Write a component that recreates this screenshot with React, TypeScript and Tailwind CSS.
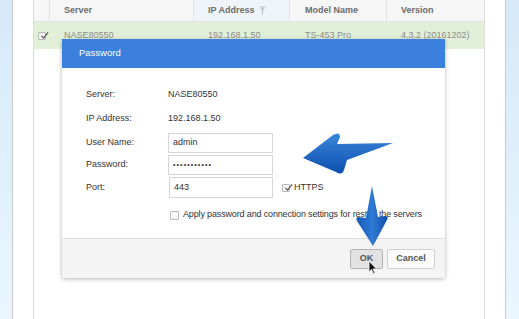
import React from "react";

const font = { fontFamily: '"Liberation Sans", Arial, sans-serif' };

function Check({ className }: { className?: string }) {
  return (
    <div className={"relative border border-[#b9b9b9] bg-[#f4f4f4] rounded-[1px] " + (className || "")}>
      <svg viewBox="0 0 10 10" className="absolute left-[1px] -top-[2px] w-[9px] h-[9px]">
        <path d="M1.5 5.5 L4 8 L9 1.5" fill="none" stroke="#555" strokeWidth="1.3" />
      </svg>
    </div>
  );
}

export default function App() {
  return (
    <div className="relative w-[519px] h-[319px] overflow-hidden flex bg-white" style={font}>
      {/* left background */}
      <div className="w-[13px] h-full bg-gradient-to-b from-[#d6e9f8] via-[#dff0fb] to-[#e9f6fe] border-r border-[#c9c9c9]" />
      {/* center white area */}
      <div className="flex-1 h-full bg-white pl-[20px] pr-[20px] flex">
        <div className="flex-1 h-full border-l border-r border-[#dcdcdc] flex flex-col">
          {/* header */}
          <div className="h-[22px] flex bg-[#f6f6f6] border-b border-[#e3e3e3] text-[9px] font-bold text-[#6b6b6b]">
            <div className="w-[16px] border-r border-[#e3e3e3]" />
            <div className="w-[144px] border-r border-[#e3e3e3] pl-[14px] flex items-center">Server</div>
            <div className="w-[96px] border-r border-[#e3e3e3] bg-[#eef4fa] pl-[14px] flex items-center gap-[4px]">
              IP Address
              <svg viewBox="0 0 8 10" className="w-[7px] h-[9px]">
                <path d="M1 1 H7 M4 1.5 V9.5 M2 4 L4 1.8 L6 4" fill="none" stroke="#b5b5b5" strokeWidth="1" />
              </svg>
            </div>
            <div className="w-[97px] border-r border-[#e3e3e3] pl-[15px] flex items-center">Model Name</div>
            <div className="flex-1 pl-[14px] flex items-center">Version</div>
          </div>
          {/* row */}
          <div className="h-[27px] flex bg-[#e3f0d9] text-[9px] text-[#8a8a8a]">
            <div className="w-[16px] flex items-center justify-center">
              <Check className="w-[8px] h-[8px]" />
            </div>
            <div className="w-[144px] pl-[14px] flex items-center">NASE80550</div>
            <div className="w-[96px] pl-[14px] flex items-center">192.168.1.50</div>
            <div className="w-[97px] pl-[15px] flex items-center">TS-453 Pro</div>
            <div className="flex-1 pl-[14px] flex items-center">4.3.2 (20161202)</div>
          </div>
          <div className="flex-1 bg-white" />
        </div>
      </div>
      {/* right background */}
      <div className="w-[14px] h-full bg-gradient-to-b from-[#d6e9f8] via-[#dff0fb] to-[#e9f6fe] border-l border-[#c9c9c9]" />

      {/* dialog */}
      <div className="absolute left-[62px] top-[39px] w-[383px] h-[239px] bg-white flex flex-col shadow-[0_1px_4px_rgba(0,0,0,0.3)] rounded-b-[3px] overflow-hidden">
        <div className="h-[29px] bg-[#3a80dc] text-white text-[9.5px] pl-[17px] flex items-center">Password</div>
        <div className="flex-1 pl-[24px] pt-[17px] text-[9px] text-[#333]">
          <div className="h-[20px] flex items-center">
            <div className="w-[82px]">Server:</div>
            <div>NASE80550</div>
          </div>
          <div className="h-[20px] mt-[4px] flex items-center">
            <div className="w-[82px]">IP Address:</div>
            <div>192.168.1.50</div>
          </div>
          <div className="h-[20px] mt-[4px] flex items-center">
            <div className="w-[82px]">User Name:</div>
            <div className="w-[105px] h-[20px] border border-[#d6d6d6] pl-[4px] flex items-center">admin</div>
          </div>
          <div className="h-[20px] mt-[2px] flex items-center">
            <div className="w-[82px]">Password:</div>
            <div className="w-[105px] h-[20px] border border-[#d6d6d6] pl-[4px] flex items-center text-[7px] tracking-[1.1px]">•••••••••••</div>
          </div>
          <div className="h-[21px] mt-[2px] flex items-center">
            <div className="w-[83px]">Port:</div>
            <div className="w-[104px] h-[21px] border border-[#d6d6d6] pl-[4px] flex items-center">443</div>
            <Check className="ml-[9px] w-[8px] h-[8px]" />
            <div className="ml-[4px]">HTTPS</div>
          </div>
          <div className="h-[18px] mt-[8px] flex items-center pl-[84px]">
            <div className="w-[9px] h-[9px] border border-[#b9b9b9] bg-[#f8f8f8] rounded-[1px]" />
            <div className="ml-[4px] tracking-[-0.15px]">Apply password and connection settings for rest of the servers</div>
          </div>
        </div>
        <div className="h-[40px] bg-[#f4f4f4] border-t border-[#dedede] flex justify-end items-start pt-[10px] pr-[10px] gap-[4px] text-[9px] font-bold text-[#555]">
          <div className="w-[33px] h-[20px] border border-[#b3b3b3] bg-[#e2e2e2] rounded-[2px] flex items-center justify-center">OK</div>
          <div className="w-[48px] h-[20px] border border-[#cfcfcf] bg-[#fbfbfb] rounded-[2px] flex items-center justify-center">Cancel</div>
        </div>
      </div>

      {/* arrows and cursor overlay */}
      <svg className="absolute left-0 top-0 pointer-events-none" width="519" height="319" viewBox="0 0 519 319">
        <defs>
          <linearGradient id="ga" x1="0" y1="0" x2="0" y2="1">
            <stop offset="0" stopColor="#3a86dc" />
            <stop offset="1" stopColor="#0d4fae" />
          </linearGradient>
          <linearGradient id="gb" x1="0" y1="0" x2="1" y2="0">
            <stop offset="0" stopColor="#1556b8" />
            <stop offset="0.5" stopColor="#2f7bd6" />
            <stop offset="1" stopColor="#0f4ea8" />
          </linearGradient>
        </defs>
        <path
          d="M303,158 L333,135 Q340,131 340,137 L337,144 L393,143 L347,160 L344,170 Q342,176 336,172 Z"
          fill="url(#ga)"
        />
        <path
          d="M372,186 L378,217 L385,216 Q389,216 387,220 L373,246 L357,221 Q355,217 359,217 L366,218 Z"
          fill="url(#gb)"
        />
        <path
          d="M369,261 L369,272 L371.5,269.5 L373.5,274 L375,273.3 L373,269 L376.5,269 Z"
          fill="#111"
          stroke="#fff"
          strokeWidth="0.8"
        />
      </svg>
    </div>
  );
}
